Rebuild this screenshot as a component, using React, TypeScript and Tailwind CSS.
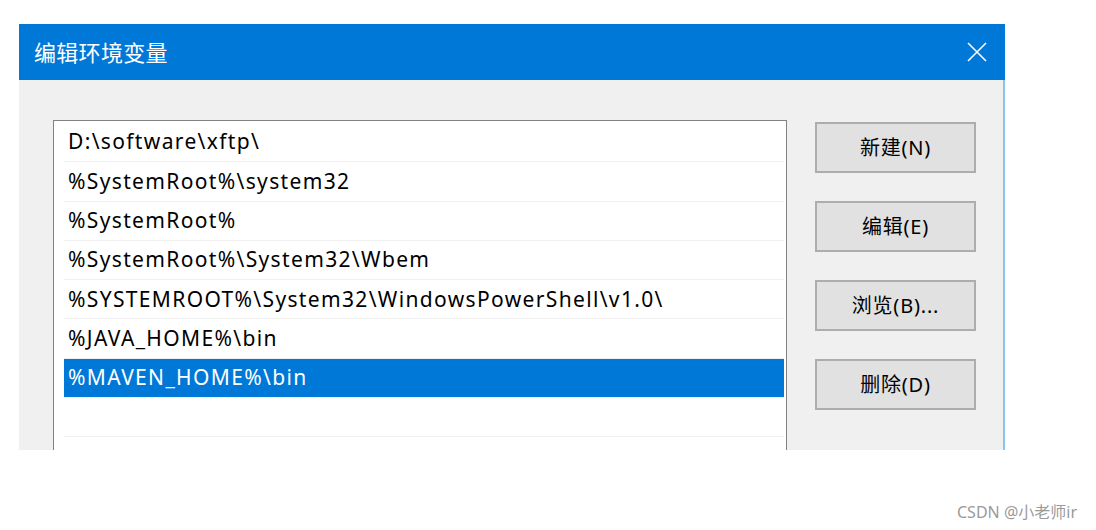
import React from 'react';

const rows: string[] = [
    'D:\\software\\xftp\\',
    '%SystemRoot%\\system32',
    '%SystemRoot%',
    '%SystemRoot%\\System32\\Wbem',
    '%SYSTEMROOT%\\System32\\WindowsPowerShell\\v1.0\\',
    '%JAVA_HOME%\\bin',
    '%MAVEN_HOME%\\bin',
    '',
];

const buttons: string[] = ['新建(N)', '编辑(E)', '浏览(B)...', '删除(D)'];

const font = { fontFamily: '"Noto Sans", "Noto Sans CJK SC", sans-serif' };

export default function App() {
    return (
        <div className="w-[1096px] h-[530px] bg-white relative overflow-hidden" style={font}>
            <div className="ml-[19px] pt-[24px] w-[986px]">
                {/* title bar */}
                <div className="h-[56px] bg-[#0078d7] flex items-center justify-between pl-[15px] pr-[18px]">
                    <span className="text-white text-[22px] tracking-[0.3px]">编辑环境变量</span>
                    <svg width="20" height="20" viewBox="0 0 20 20" className="text-white">
                        <path d="M1 1 L19 19 M19 1 L1 19" stroke="currentColor" strokeWidth="1.6" fill="none" />
                    </svg>
                </div>
                {/* body */}
                <div className="h-[370px] flex">
                    <div className="flex-1 bg-[#f0f0f0] flex pl-[34px] pt-[40px]">
                        <div className="w-[734px] h-[330px] bg-white border border-[#828282] border-b-0 pt-[2px] pr-[2px] pl-[10px]">
                            {rows.map((r, i) => (
                                <div
                                    key={i}
                                    className={
                                        i === 6
                                            ? 'h-[39.3px] flex items-center pl-[4px] bg-[#0078d7] text-white text-[21px] tracking-[1.35px] border-b border-[#f0f0f0]'
                                            : 'h-[39.3px] flex items-center pl-[4px] text-black text-[21px] tracking-[1.35px] border-b border-[#f0f0f0]'
                                    }
                                >
                                    {r}
                                </div>
                            ))}
                        </div>
                        <div className="ml-[28px] flex flex-col gap-[28px] pt-[2px]">
                            {buttons.map((b) => (
                                <div
                                    key={b}
                                    className="w-[161px] h-[51px] bg-[#e1e1e1] border-2 border-[#adadad] flex items-center justify-center text-[20px] tracking-[0.8px] text-black"
                                >
                                    {b}
                                </div>
                            ))}
                        </div>
                    </div>
                    <div className="w-[2px] bg-[#8cc4f0]" />
                </div>
            </div>
            <div className="absolute left-[957px] top-[500px] text-[16px] text-[#9a9a9a]">CSDN @小老师ir</div>
        </div>
    );
}
